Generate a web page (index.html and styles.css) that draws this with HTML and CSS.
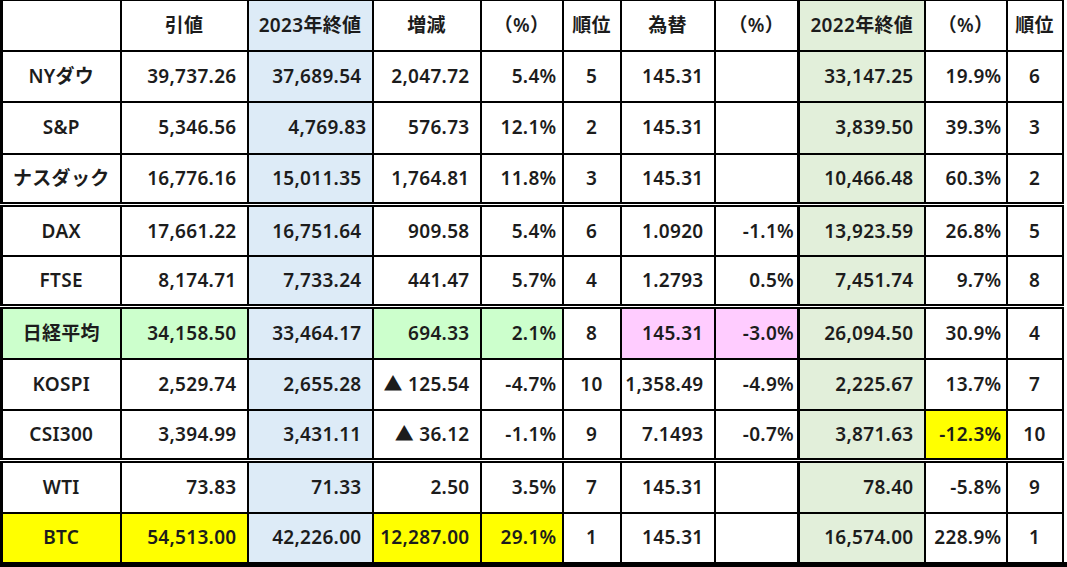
FILE: index.html
```html
<!DOCTYPE html>
<html lang="ja">
<head>
<meta charset="utf-8">
<link rel="stylesheet" href="styles.css">
</head>
<body>
<div class="wrap">
<table class="grid">
<colgroup>
<col class="c0"><col class="c1"><col class="c2"><col class="c3"><col class="c4"><col class="c5"><col class="c6"><col class="c7"><col class="c8"><col class="c9"><col class="c10">
</colgroup>
<thead>
<tr class="hd">
<th></th><th>引値</th><th class="blue">2023年終値</th><th>増減</th><th>（%）</th><th>順位</th><th>為替</th><th class="thick">（%）</th><th class="green">2022年終値</th><th>（%）</th><th>順位</th>
</tr>
</thead>
<tbody>
<tr>
<td class="lbl">NYダウ</td><td class="num">39,737.26</td><td class="num blue">37,689.54</td><td class="num">2,047.72</td><td class="pct">5.4%</td><td class="rk">5</td><td class="num">145.31</td><td class="pct7 thick"></td><td class="num green">33,147.25</td><td class="pct9">19.9%</td><td class="rk">6</td>
</tr>
<tr>
<td class="lbl">S&amp;P</td><td class="num">5,346.56</td><td class="num blue shift">4,769.83</td><td class="num">576.73</td><td class="pct">12.1%</td><td class="rk">2</td><td class="num">145.31</td><td class="pct7 thick"></td><td class="num green">3,839.50</td><td class="pct9">39.3%</td><td class="rk">3</td>
</tr>
<tr class="dbl">
<td class="lbl">ナスダック</td><td class="num">16,776.16</td><td class="num blue">15,011.35</td><td class="num">1,764.81</td><td class="pct">11.8%</td><td class="rk">3</td><td class="num">145.31</td><td class="pct7 thick"></td><td class="num green">10,466.48</td><td class="pct9">60.3%</td><td class="rk">2</td>
</tr>
<tr class="after">
<td class="lbl">DAX</td><td class="num">17,661.22</td><td class="num blue">16,751.64</td><td class="num">909.58</td><td class="pct">5.4%</td><td class="rk">6</td><td class="num">1.0920</td><td class="pct7 thick">-1.1%</td><td class="num green">13,923.59</td><td class="pct9">26.8%</td><td class="rk">5</td>
</tr>
<tr class="dbl">
<td class="lbl">FTSE</td><td class="num">8,174.71</td><td class="num blue">7,733.24</td><td class="num">441.47</td><td class="pct">5.7%</td><td class="rk">4</td><td class="num">1.2793</td><td class="pct7 thick">0.5%</td><td class="num green">7,451.74</td><td class="pct9">9.7%</td><td class="rk">8</td>
</tr>
<tr class="after">
<td class="lbl lgreen">日経平均</td><td class="num lgreen">34,158.50</td><td class="num blue">33,464.17</td><td class="num lgreen">694.33</td><td class="pct lgreen">2.1%</td><td class="rk">8</td><td class="num pink">145.31</td><td class="pct7 thick pink">-3.0%</td><td class="num green">26,094.50</td><td class="pct9">30.9%</td><td class="rk">4</td>
</tr>
<tr>
<td class="lbl">KOSPI</td><td class="num">2,529.74</td><td class="num blue">2,655.28</td><td class="num">▲ 125.54</td><td class="pct">-4.7%</td><td class="rk">10</td><td class="num">1,358.49</td><td class="pct7 thick">-4.9%</td><td class="num green">2,225.67</td><td class="pct9">13.7%</td><td class="rk">7</td>
</tr>
<tr class="dbl">
<td class="lbl">CSI300</td><td class="num">3,394.99</td><td class="num blue">3,431.11</td><td class="num">▲ 36.12</td><td class="pct">-1.1%</td><td class="rk">9</td><td class="num">7.1493</td><td class="pct7 thick">-0.7%</td><td class="num green">3,871.63</td><td class="pct9 yellow">-12.3%</td><td class="rk">10</td>
</tr>
<tr class="after">
<td class="lbl">WTI</td><td class="num">73.83</td><td class="num blue">71.33</td><td class="num">2.50</td><td class="pct">3.5%</td><td class="rk">7</td><td class="num">145.31</td><td class="pct7 thick"></td><td class="num green">78.40</td><td class="pct9">-5.8%</td><td class="rk">9</td>
</tr>
<tr class="last">
<td class="lbl yellow">BTC</td><td class="num yellow">54,513.00</td><td class="num blue">42,226.00</td><td class="num yellow">12,287.00</td><td class="pct yellow">29.1%</td><td class="rk">1</td><td class="num">145.31</td><td class="pct7 thick"></td><td class="num green">16,574.00</td><td class="pct9">228.9%</td><td class="rk">1</td>
</tr>
</tbody>
</table>
</div>
</body>
</html>
```

FILE: styles.css
```css
html, body {
  margin: 0;
  padding: 0;
  background: #ffffff;
}

.wrap {
  width: 1067px;
  height: 567px;
  box-sizing: border-box;
  border-bottom: 5px solid #000;
  overflow: hidden;
}

.grid {
  height: 562px;
  border-collapse: collapse;
  table-layout: fixed;
  font-family: "Noto Sans", "Noto Sans CJK JP", sans-serif;
  font-size: 19px;
  font-weight: 600;
  letter-spacing: 0.3px;
  color: #1c1c1c;
  border-top: 1px solid #000;
  border-left: 3px solid #000;
  border-right: 1px solid #000;
}

.c0 { width: 119px; }
.c1 { width: 127px; }
.c2 { width: 125px; }
.c3 { width: 108px; }
.c4 { width: 82px; }
.c5 { width: 58px; }
.c6 { width: 94px; }
.c7 { width: 84px; }
.c8 { width: 126px; }
.c9 { width: 82px; }
.c10 { width: 56px; }

.grid th,
.grid td {
  border: 2px solid #000;
  padding: 0;
  height: 49px;
  line-height: 1;
  white-space: nowrap;
  overflow: hidden;
}

.grid tr.hd th {
  height: 49px;
  text-align: center;
  font-weight: 600;
  border-top: none;
}

.grid tr.dbl td {
  border-bottom: 5px double #000;
  height: 47px;
}

.grid tr.after td {
  height: 48px;
}

.grid tr.last td {
  border-bottom: none;
  height: 48px;
}

.grid .thick {
  border-right: 3px solid #000;
}

.grid td.lbl { text-align: center; }
.grid td.rk { text-align: center; }
.grid td.num { text-align: right; padding-right: 10px; }
.grid td.pct { text-align: right; padding-right: 5px; }
.grid td.pct7 { text-align: right; padding-right: 3px; }
.grid td.pct9 { text-align: right; padding-right: 4px; }
.grid td.shift { padding-right: 5px; }

.blue { background: #ddebf7; }
.green { background: #e2efda; }
.lgreen { background: #ccffcc; }
.pink { background: #ffccff; }
.yellow { background: #ffff00; }
```
